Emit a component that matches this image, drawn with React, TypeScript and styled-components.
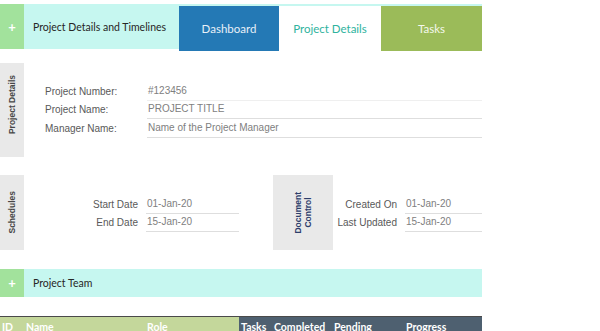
import React from "react";
import styled, { createGlobalStyle } from "styled-components";

const GlobalStyle = createGlobalStyle`
  html, body {
    margin: 0;
    padding: 0;
    background: #ffffff;
  }
  body {
    font-family: "Liberation Sans", Arial, sans-serif;
    overflow: hidden;
  }
`;

const Page = styled.div`
  width: 600px;
  height: 331px;
  overflow: hidden;
`;

const Sheet = styled.div`
  width: 482px;
  padding-top: 4px;
`;

const Header = styled.div`
  display: flex;
  align-items: flex-start;
`;

const Band = styled.div<{ $width?: number; $height: number }>`
  display: flex;
  align-items: center;
  height: ${(p) => p.$height}px;
  width: ${(p) => (p.$width ? `${p.$width}px` : "auto")};
  flex: ${(p) => (p.$width ? "none" : "1")};
  background: #c6f7f0;
`;

const PlusBox = styled.div`
  width: 24px;
  height: 100%;
  flex: none;
  display: flex;
  align-items: center;
  justify-content: center;
  background: #a2e29c;
  color: #ffffff;
  font-family: Lato, "Open Sans", sans-serif;
  font-weight: 700;
  font-size: 13px;
`;

const BandTitle = styled.span`
  margin-left: 9px;
  font-family: Lato, "Open Sans", sans-serif;
  font-size: 10.5px;
  font-weight: 400;
  color: #262626;
  white-space: nowrap;
`;

const TabStrip = styled.div`
  display: flex;
  flex: 1;
  border-top: 2px solid #c6f7f0;
`;

const Tab = styled.div<{ $bg: string; $fg: string; $width: number }>`
  width: ${(p) => p.$width}px;
  height: 45px;
  display: flex;
  align-items: center;
  justify-content: center;
  background: ${(p) => p.$bg};
  color: ${(p) => p.$fg};
  font-family: Lato, "Open Sans", sans-serif;
  font-size: 11.5px;
`;

const Section = styled.div<{ $top: number; $height: number }>`
  display: flex;
  margin-top: ${(p) => p.$top}px;
  height: ${(p) => p.$height}px;
`;

const SideLabel = styled.div<{ $width: number }>`
  width: ${(p) => p.$width}px;
  flex: none;
  background: #e9e9e9;
  display: flex;
  align-items: center;
  justify-content: center;
`;

const Rotated = styled.div<{ $color?: string; $shift?: number }>`
  writing-mode: vertical-rl;
  transform: rotate(180deg) translateY(${(p) => p.$shift || 0}px);
  font-size: 8.5px;
  font-weight: 700;
  line-height: 10px;
  text-align: center;
  color: ${(p) => p.$color || "#474747"};
`;

const FieldGrid = styled.div<{ $cols: string; $left: number; $rows: string }>`
  display: grid;
  grid-template-columns: ${(p) => p.$cols};
  grid-template-rows: ${(p) => p.$rows};
  column-gap: 8px;
  align-content: start;
  padding-top: 21px;
  margin-left: ${(p) => p.$left}px;
  font-size: 10px;
  line-height: 12px;
`;

const FieldLabel = styled.div<{ $right?: boolean }>`
  display: flex;
  align-items: flex-end;
  justify-content: ${(p) => (p.$right ? "flex-end" : "flex-start")};
  padding-bottom: 3px;
  color: #595959;
  white-space: nowrap;
`;

const FieldValue = styled.div<{ $light?: boolean }>`
  display: flex;
  align-items: flex-end;
  padding-bottom: 3px;
  padding-left: 1px;
  color: #808080;
  border-bottom: 1px solid ${(p) => (p.$light ? "#efefef" : "#dedede")};
  white-space: nowrap;
`;

const Spacer = styled.div<{ $width: number }>`
  width: ${(p) => p.$width}px;
  flex: none;
`;

const TableHead = styled.div`
  margin-top: 19px;
  display: grid;
  grid-template-columns: 24px 121px 94px 33px 60px 72px 78px;
  height: 20px;
  border-top: 1px solid #4a4a4a;
  font-family: Lato, "Open Sans", sans-serif;
  font-size: 10.5px;
  font-weight: 700;
  color: #ffffff;
`;

const HeadCell = styled.div<{ $dark?: boolean }>`
  display: flex;
  align-items: center;
  padding-left: 2px;
  background: ${(p) => (p.$dark ? "#4e6070" : "#c4d79b")};
  white-space: nowrap;
`;

const details = [
  { label: "Project Number:", value: "#123456" },
  { label: "Project Name:", value: "PROJECT TITLE" },
  { label: "Manager Name:", value: "Name of the Project Manager" },
];

const schedule = [
  { label: "Start Date", value: "01-Jan-20" },
  { label: "End Date", value: "15-Jan-20" },
];

const docControl = [
  { label: "Created On", value: "01-Jan-20" },
  { label: "Last Updated", value: "15-Jan-20" },
];

const columns = [
  { name: "ID", dark: false },
  { name: "Name", dark: false },
  { name: "Role", dark: false },
  { name: "Tasks", dark: true },
  { name: "Completed", dark: true },
  { name: "Pending", dark: true },
  { name: "Progress", dark: true },
];

const App = () => {
  return (
    <Page>
      <GlobalStyle />
      <Sheet>
        <Header>
          <Band $width={179} $height={45}>
            <PlusBox>+</PlusBox>
            <BandTitle>Project Details and Timelines</BandTitle>
          </Band>
          <TabStrip>
            <Tab $bg="#2479b5" $fg="#e8f0f8" $width={100}>
              Dashboard
            </Tab>
            <Tab $bg="#ffffff" $fg="#2fb39e" $width={102}>
              Project Details
            </Tab>
            <Tab $bg="#9bbb59" $fg="#f4f8ec" $width={101}>
              Tasks
            </Tab>
          </TabStrip>
        </Header>

        <Section $top={12} $height={94}>
          <SideLabel $width={24}>
            <Rotated $shift={5}>Project Details</Rotated>
          </SideLabel>
          <FieldGrid $cols="94px 335px" $left={21} $rows="17px 18px 19px">
            {details.map((d, i) => (
              <React.Fragment key={d.label}>
                <FieldLabel>{d.label}</FieldLabel>
                <FieldValue $light={i === 0}>{d.value}</FieldValue>
              </React.Fragment>
            ))}
          </FieldGrid>
        </Section>

        <Section $top={18} $height={75}>
          <SideLabel $width={24}>
            <Rotated>Schedules</Rotated>
          </SideLabel>
          <FieldGrid $cols="114px 93px" $left={0} $rows="18px 18px">
            {schedule.map((d) => (
              <React.Fragment key={d.label}>
                <FieldLabel $right>{d.label}</FieldLabel>
                <FieldValue>{d.value}</FieldValue>
              </React.Fragment>
            ))}
          </FieldGrid>
          <Spacer $width={34} />
          <SideLabel $width={60}>
            <Rotated $color="#2d3e6b">
              Document
              <br />
              Control
            </Rotated>
          </SideLabel>
          <FieldGrid $cols="64px 77px" $left={0} $rows="18px 18px">
            {docControl.map((d) => (
              <React.Fragment key={d.label}>
                <FieldLabel $right>{d.label}</FieldLabel>
                <FieldValue>{d.value}</FieldValue>
              </React.Fragment>
            ))}
          </FieldGrid>
        </Section>

        <Section $top={19} $height={28}>
          <Band $height={28}>
            <PlusBox>+</PlusBox>
            <BandTitle>Project Team</BandTitle>
          </Band>
        </Section>

        <TableHead>
          {columns.map((c) => (
            <HeadCell key={c.name} $dark={c.dark}>
              {c.name}
            </HeadCell>
          ))}
        </TableHead>
      </Sheet>
    </Page>
  );
};

export default App;
